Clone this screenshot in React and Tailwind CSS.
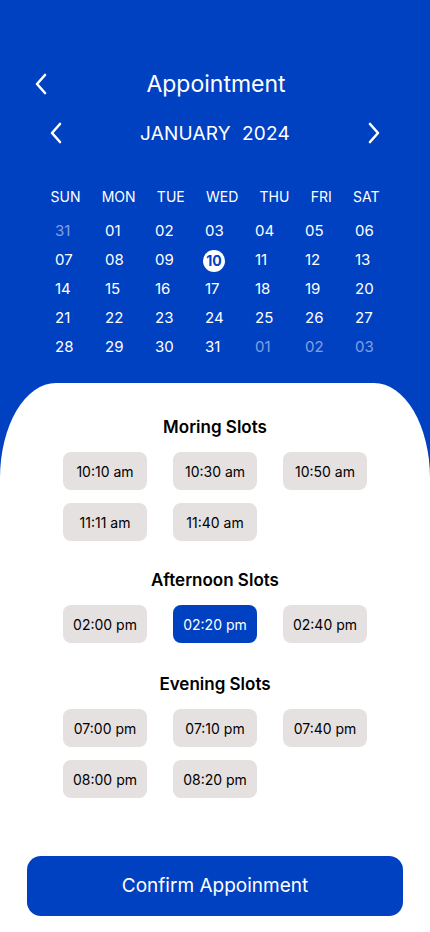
import React from "react";

const BLUE = "bg-[#0041c2]";

function Chevron({ dir = "left", className = "" }) {
  return (
    <svg width="14" height="22" viewBox="0 0 14 22" className={className} fill="none">
      {dir === "left" ? (
        <path d="M11 2 L3 11 L11 20" stroke="white" strokeWidth="2.6" strokeLinecap="round" strokeLinejoin="round" />
      ) : (
        <path d="M3 2 L11 11 L3 20" stroke="white" strokeWidth="2.6" strokeLinecap="round" strokeLinejoin="round" />
      )}
    </svg>
  );
}

const days = ["SUN", "MON", "TUE", "WED", "THU", "FRI", "SAT"];
const weeks = [
  [["31", true], ["01"], ["02"], ["03"], ["04"], ["05"], ["06"]],
  [["07"], ["08"], ["09"], ["10", false, true], ["11"], ["12"], ["13"]],
  [["14"], ["15"], ["16"], ["17"], ["18"], ["19"], ["20"]],
  [["21"], ["22"], ["23"], ["24"], ["25"], ["26"], ["27"]],
  [["28"], ["29"], ["30"], ["31"], ["01", true], ["02", true], ["03", true]],
];

function Slot({ label, active }) {
  return (
    <div
      className={`h-[38px] w-[84px] rounded-[8px] flex items-center justify-center text-[14px] ${
        active ? "bg-[#0041c2] text-white" : "bg-[#e6e1e1] text-black"
      }`}
    >
      {label}
    </div>
  );
}

function Section({ title, slots, active, className = "" }) {
  return (
    <div className={className}>
      <div className="text-center text-[17px] leading-6 font-semibold text-black">{title}</div>
      <div className="mt-[13px] grid grid-cols-[repeat(3,84px)] gap-x-[26px] gap-y-[13px] justify-center">
        {slots.map((s) => (
          <Slot key={s} label={s} active={s === active} />
        ))}
      </div>
    </div>
  );
}

export default function App() {
  return (
    <div
      className={`w-[430px] h-[932px] ${BLUE} flex flex-col overflow-hidden`}
      style={{ fontFamily: "Inter, 'Open Sans', sans-serif" }}
    >
      <div className="pt-[70px] relative h-[98px] flex items-end">
        <div className="relative w-full h-7 flex items-center justify-center">
          <Chevron dir="left" className="absolute left-[34px]" />
          <span className="text-white text-[23px] leading-7 pl-[2px]">Appointment</span>
        </div>
      </div>
      <div className="mt-[21px] h-7 flex items-center justify-between px-[49px]">
        <Chevron dir="left" />
        <span className="text-white text-[19px] leading-7 tracking-[0.2px] pt-[2px]">JANUARY&nbsp;&nbsp;2024</span>
        <Chevron dir="right" />
      </div>
      <div className="mt-[40px] mx-auto w-[329px] flex justify-between text-white text-[14px] leading-5">
        {days.map((d) => (
          <span key={d}>{d}</span>
        ))}
      </div>
      <div className="mt-[10px] ml-[55px] w-[350px] grid grid-cols-7">
        {weeks.flat().map(([d, muted, sel], i) => (
          <div key={i} className="h-[29px] flex items-center">
            {sel ? (
              <span className="-ml-[2px] w-[22px] h-[22px] rounded-full bg-white text-[#0041c2] font-bold text-[14px] flex items-center justify-center">
                {d}
              </span>
            ) : (
              <span className={`text-[15px] ${muted ? "text-white/50" : "text-white"}`}>{d}</span>
            )}
          </div>
        ))}
      </div>
      <div className="mt-[21px] flex-1 bg-white rounded-t-[56px_95px] pt-[32px]">
        <Section title="Moring Slots" slots={["10:10 am", "10:30 am", "10:50 am", "11:11 am", "11:40 am"]} />
        <Section
          className="mt-[27px]"
          title="Afternoon Slots"
          slots={["02:00 pm", "02:20 pm", "02:40 pm"]}
          active="02:20 pm"
        />
        <Section
          className="mt-[29px]"
          title="Evening Slots"
          slots={["07:00 pm", "07:10 pm", "07:40 pm", "08:00 pm", "08:20 pm"]}
        />
        <button className="mt-[58px] mx-auto block w-[376px] h-[60px] rounded-[14px] bg-[#0041c2] text-white text-[19px]">
          Confirm Appoinment
        </button>
      </div>
    </div>
  );
}
